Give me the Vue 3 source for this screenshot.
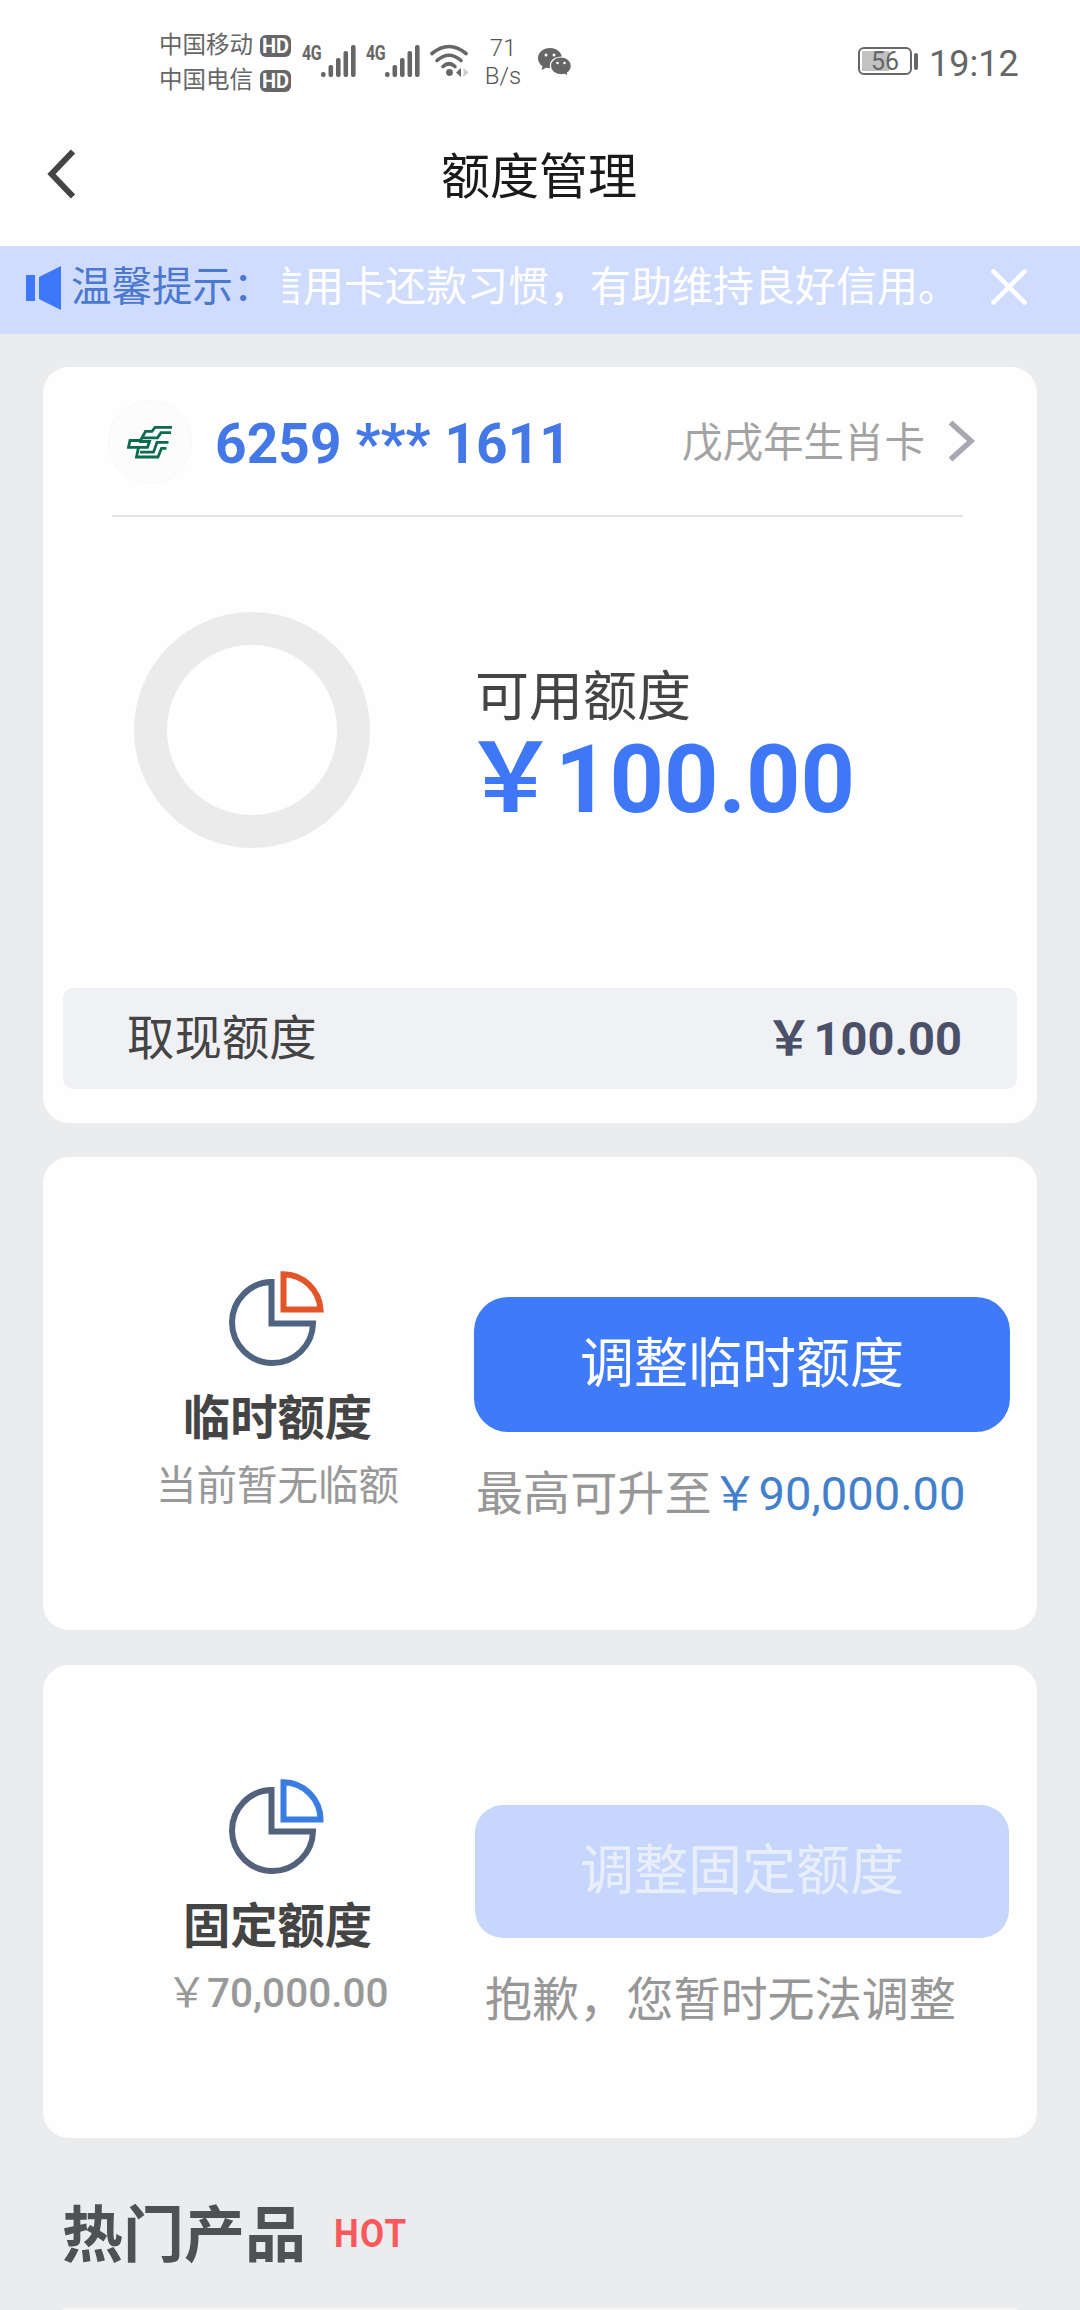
<script setup>
const bars = [5, 12, 19, 26, 32]
const carriers = ['中国移动', '中国电信']
</script>

<template>
  <div class="page">
    <header class="status">
      <div class="carriers">
        <div v-for="c in carriers" :key="c" class="carrier"><span>{{ c }}</span><b class="hd">HD</b></div>
      </div>
      <div v-for="n in 2" :key="n" class="signal">
        <b class="net">4G</b>
        <svg width="36" height="32" viewBox="0 0 36 32">
          <rect v-for="(h, i) in bars" :key="i" :x="i * 7.5" :y="32 - h" width="4.6" :height="h" rx="2" fill="#666" />
        </svg>
      </div>
      <svg class="wifi" width="40" height="34" viewBox="0 0 40 34" fill="none" stroke="#666" stroke-width="3.6" stroke-linecap="round">
        <path d="M2 9.500Q19 -4.500 36 9.500" />
        <path d="M7 16.500Q19 6 31 16.500" />
        <path d="M13 22.500Q19 17 25 22.500" />
        <circle cx="19.500" cy="28.500" r="3.400" fill="#666" stroke="none" />
        <path d="M31 24v9l-5-4.500z" fill="#666" stroke="none" />
        <path d="M33.500 24v9l5-4.500z" fill="#ccc" stroke="none" />
      </svg>
      <div class="speed"><span>71</span><span>B/s</span></div>
      <svg class="wechat" width="34" height="30" viewBox="0 0 34 30">
        <path d="M12 0C5 0 0 4.500 0 10.200c0 3.400 1.800 6 4.500 8L3.600 22l4.600-2.200c1.300.3 2.500.4 3.800.4 6.800 0 12-4.300 12-10S18.800 0 12 0z" fill="#666" />
        <path d="M23 9c-6 0-10.600 3.900-10.600 8.900S17 26.800 23 26.800c1.200 0 2.400-.2 3.500-.5l3.800 2-.9-3.300c2.300-1.700 3.900-4.200 3.900-7.100C33.300 12.900 28.800 9 23 9z" fill="#666" stroke="#fff" stroke-width="1.200" />
        <g fill="#fff"><circle cx="8" cy="7" r="1.500" /><circle cx="16" cy="7" r="1.500" /><circle cx="19.500" cy="15" r="1.300" /><circle cx="26.500" cy="15" r="1.300" /></g>
      </svg>
      <div class="battery"><i class="charge"></i><span>56</span></div>
      <i class="nub"></i>
      <time>19:12</time>
    </header>

    <nav class="nav">
      <svg class="back" width="30" height="50" viewBox="0 0 30 50" fill="none" stroke="#444" stroke-width="6">
        <path d="M26 2.500L4.500 25 26 47.500" />
      </svg>
      <h1>额度管理</h1>
      <span class="nav-pad"></span>
    </nav>

    <div class="notice">
      <svg class="speaker" width="36" height="46" viewBox="0 0 36 46" fill="#3d78fa">
        <path d="M0 10h9v26H0zM13 12L35 1v44L13 34z" />
      </svg>
      <span class="notice-label">温馨提示：</span>
      <div class="marquee"><span>信用卡还款习惯，有助维持良好信用。</span></div>
      <svg class="close" width="36" height="36" viewBox="0 0 36 36" stroke="#fff" stroke-width="4.500"><path d="M1 1l34 34M35 1L1 35" /></svg>
    </div>

    <main>
      <section class="card summary">
        <div class="card-head">
          <div class="logo">
            <svg width="46" height="34" viewBox="0 0 46 34" fill="none" stroke="#0b6b4f" stroke-width="2.800">
              <path d="M45 2.300H28L25 6.300H18.500L13.500 15.500H3L1.500 22.300H11.500L9.500 32H31L34.500 23.300H39.500" />
              <path d="M44 7.600H34L30.500 12.800H16" />
              <path d="M41.500 17.300H30L26.500 27.200H13" />
              <path d="M12 16.500H22.500L20.500 22.300H11" />
            </svg>
          </div>
          <strong class="number">6259 *** 1611</strong>
          <span class="card-name">戊戌年生肖卡</span>
          <svg width="30" height="44" viewBox="0 0 30 44" fill="none" stroke="#a8a8b2" stroke-width="5.500"><path d="M3.500 3.500L24 22 3.500 40.500" /></svg>
        </div>
        <div class="available">
          <div class="ring"></div>
          <div class="avail-text">
            <div class="avail-label">可用额度</div>
            <div class="avail-amount"><span class="yen">￥</span>100.00</div>
          </div>
        </div>
        <div class="cash"><span>取现额度</span><strong><span class="yen">￥</span>100.00</strong></div>
      </section>

      <section class="card limit">
        <div class="kind">
          <svg width="96" height="96" viewBox="0 0 96 96" fill="none" stroke-width="6">
            <path d="M42.500 11A40.500 40.500 0 1 0 84 52.500H42.500z" stroke="#4f6480" />
            <path d="M54.500 3.200V38.500H91.500A37.500 37.500 0 0 0 54.500 3.200z" stroke="#e2552b" />
          </svg>
          <h2>临时额度</h2>
          <p>当前暂无临额</p>
        </div>
        <div class="action">
          <button class="btn">调整临时额度</button>
          <p class="tip">最高可升至<span class="max"><span class="yen">￥</span>90,000.00</span></p>
        </div>
      </section>

      <section class="card limit fixed">
        <div class="kind">
          <svg width="96" height="96" viewBox="0 0 96 96" fill="none" stroke-width="6">
            <path d="M42.500 11A40.500 40.500 0 1 0 84 52.500H42.500z" stroke="#52627a" />
            <path d="M54.500 3.200V40.500H91.500A37.500 37.500 0 0 0 54.500 3.200z" stroke="#3a7de0" />
          </svg>
          <h2>固定额度</h2>
          <p class="sum"><span class="yen">￥</span>70,000.00</p>
        </div>
        <div class="action">
          <button class="btn off" disabled>调整固定额度</button>
          <p class="tip sorry">抱歉，您暂时无法调整</p>
        </div>
      </section>

      <div class="hot"><h3>热门产品</h3><b>HOT</b></div>
      <div class="products"></div>
    </main>
  </div>
</template>

<style>
body { margin: 0; background: #ebecee; }
</style>

<style scoped>
* { box-sizing: border-box; margin: 0; padding: 0; }
.page {
  width: 1080px; height: 2310px; overflow: hidden; background: #ebecee;
  font-family: Roboto, "Noto Sans CJK SC", sans-serif; color: #444;
  display: flex; flex-direction: column; white-space: nowrap;
}
svg { display: block; flex: none; }
.status { height: 110px; background: #fff; display: flex; align-items: flex-start; padding: 0 0 0 159px; color: #666; flex: none; }
.carriers { width: 143px; padding-top: 28px; }
.carrier { display: flex; align-items: center; height: 35px; font-size: 23.5px; line-height: 35px; }
.hd { margin-left: 7px; width: 31px; height: 22px; border-radius: 6px; background: #666; color: #fff; font-size: 20px; line-height: 22px; text-align: center; }
.signal { display: flex; width: 64px; padding-top: 45px; }
.net { width: 19px; font-size: 20px; line-height: 17px; transform: scaleX(.8); transform-origin: left; letter-spacing: -.5px; }
.wifi { margin: 44px 0 0 0; }
.speed { display: flex; flex-direction: column; align-items: center; width: 44px; margin: 34px 0 0 11px; font-size: 24px; line-height: 28px; font-weight: 300; color: #555; }
.wechat { margin: 48px 0 0 13px; }
.battery { position: relative; margin: 47px 0 0 286px; width: 54px; height: 28px; border: 2px solid #666; border-radius: 6px; text-align: center; font-size: 25px; line-height: 26px; }
.charge { position: absolute; left: 2px; top: 2px; width: 27px; height: 20px; background: #c2c2c2; }
.battery span { position: relative; }
.nub { width: 4px; height: 17px; margin: 53px 0 0 2px; border-radius: 2px; background: #666; }
time { margin: 43px 0 0 11px; font-size: 36px; line-height: 42px; }
.nav { height: 136px; flex: none; background: #fff; display: flex; align-items: center; padding: 0 49px 0 47px; justify-content: space-between; }
.back { margin-top: -8px; }
.nav-pad { width: 30px; }
h1 { font-size: 49px; line-height: 60px; font-weight: 400; color: #1a1a1a; }
.notice { height: 88px; flex: none; background: #d0dcfd; display: flex; align-items: center; padding: 0 53px 6px 26px; font-size: 41px; line-height: 60px; }
.speaker { margin-top: 1px; }
.notice-label { width: 211px; margin-left: 9px; font-size: 40.500px; color: #4b78d0; overflow: hidden; }
.marquee { width: 676px; overflow: hidden; display: flex; justify-content: flex-end; color: #fff; margin-left: 1px; }
.close { margin-left: 32px; }
main { padding: 33px 43px 0; display: flex; flex-direction: column; flex: 1; }
.card { background: #fefefe; border-radius: 26px; flex: none; }
.summary { height: 756px; display: flex; flex-direction: column; padding: 0 20px 34px 20px; }
.card-head { height: 150px; margin: 0 54px 0 49px; border-bottom: 2px solid #e3e3e6; display: flex; align-items: center; }
.logo { width: 84px; height: 84px; border-radius: 50%; background: #fcfcfc; border: 1px solid #f8f8f8; display: flex; align-items: center; justify-content: center; margin: 2px 0 0 -4px; flex: none; }
.number { margin: 5px 0 0 23px; font-size: 55px; line-height: 70px; letter-spacing: .1px; color: #4478e6; font-weight: 700; flex: 1; }
.card-name { font-size: 40.500px; color: #a3a3a3; margin: -4px 22px 0 0; }
.card-head > svg { margin-right: -14px; }
.available { flex: 1; display: flex; align-items: flex-start; padding: 95px 0 0 71px; }
.ring { width: 236px; height: 236px; border: 33px solid #ebebeb; border-radius: 50%; flex: none; }
.avail-text { margin-left: 105px; padding-top: 55px; }
.avail-label { font-size: 54px; line-height: 62px; }
.avail-amount { font-size: 95px; line-height: 84px; font-weight: 700; color: #3f78f6; }
.yen { font-family: "Noto Sans CJK SC", sans-serif; }
.avail-amount .yen { margin: 0 -3px 0 -12px; }
.cash { height: 101px; border-radius: 10px; background: #f0f1f5; display: flex; align-items: center; justify-content: space-between; padding: 0 55px 9px 64px; font-size: 47.400px; }
.cash strong { color: #4a5068; font-size: 47px; }
.cash .yen { margin-right: 1px; }
.limit { margin-top: 34px; height: 473px; display: flex; }
.fixed { margin-top: 35px; }
.kind { width: 383px; margin-left: 43px; padding-top: 114px; display: flex; flex-direction: column; align-items: center; }
.kind svg { margin-left: -1px; }
h2 { margin-top: 23px; font-size: 47.300px; line-height: 58px; font-weight: 700; }
.kind p { margin-top: 8px; font-size: 40.500px; line-height: 60px; color: #999; }
.kind .sum { margin-top: 4px; font-weight: 500; }
.sum .yen { font-weight: 400; }
.action { width: 536px; margin-left: 5px; padding-top: 140px; }
.btn { display: block; width: 536px; height: 135px; border: 0; border-radius: 34px; background: #3f7af8; color: #fff; font: 400 54px/130px Roboto, "Noto Sans CJK SC", sans-serif; }
.off { width: 534px; height: 133px; margin: 0 1px; border-radius: 28px; background: #c6d6fc; color: #e9effa; line-height: 127px; }
.tip { margin-top: 27px; padding-left: 2px; font-size: 47.100px; line-height: 62px; color: #979797; }
.max { color: #4380cb; }
.sorry { margin-top: 31px; padding-left: 11px; }
.hot { display: flex; align-items: center; height: 170px; padding: 25px 0 0 19px; flex: none; }
h3 { font-size: 61px; line-height: 80px; font-weight: 700; color: #505154; }
.hot b { margin: -3px 0 0 28px; font-size: 38px; line-height: 50px; letter-spacing: 1.500px; color: #f9595c; transform: scaleX(.92); transform-origin: left; }
.products { height: 40px; margin: 0 20px; background: #f6f6f7; flex: none; }
</style>
